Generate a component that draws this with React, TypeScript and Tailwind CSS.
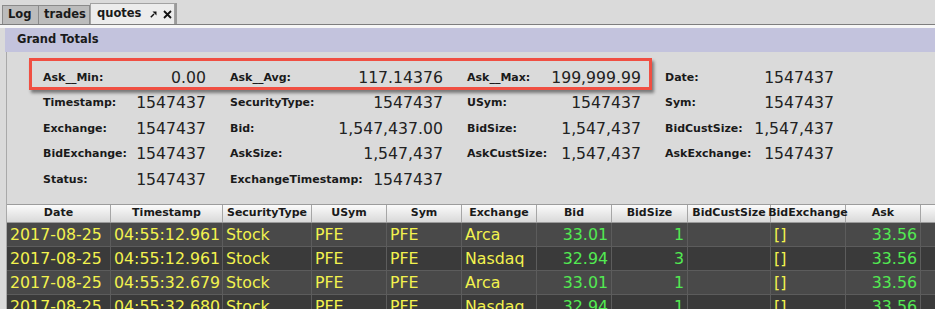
import React from "react";

type Stat = [string, string] | null;

const stats: Stat[][] = [
  [["Ask__Min:", "0.00"], ["Ask__Avg:", "117.14376"], ["Ask__Max:", "199,999.99"], ["Date:", "1547437"]],
  [["Timestamp:", "1547437"], ["SecurityType:", "1547437"], ["USym:", "1547437"], ["Sym:", "1547437"]],
  [["Exchange:", "1547437"], ["Bid:", "1,547,437.00"], ["BidSize:", "1,547,437"], ["BidCustSize:", "1,547,437"]],
  [["BidExchange:", "1547437"], ["AskSize:", "1,547,437"], ["AskCustSize:", "1,547,437"], ["AskExchange:", "1547437"]],
  [["Status:", "1547437"], ["ExchangeTimestamp:", "1547437"], null, null],
];

const columns = [
  { name: "Date", w: "w-[104px]", align: "text-left", color: "text-[#f2f24e]" },
  { name: "Timestamp", w: "w-[112px]", align: "text-left", color: "text-[#f2f24e]" },
  { name: "SecurityType", w: "w-[89px]", align: "text-left", color: "text-[#f2f24e]" },
  { name: "USym", w: "w-[75px]", align: "text-left", color: "text-[#f2f24e]" },
  { name: "Sym", w: "w-[75px]", align: "text-left", color: "text-[#f2f24e]" },
  { name: "Exchange", w: "w-[75px]", align: "text-left", color: "text-[#f2f24e]" },
  { name: "Bid", w: "w-[75px]", align: "text-right", color: "text-[#52ea52]" },
  { name: "BidSize", w: "w-[76px]", align: "text-right", color: "text-[#52ea52]" },
  { name: "BidCustSize", w: "w-[83px]", align: "text-right", color: "text-[#52ea52]" },
  { name: "BidExchange", w: "w-[75px]", align: "text-left", color: "text-[#f2f24e]" },
  { name: "Ask", w: "w-[75px]", align: "text-right", color: "text-[#52ea52]" },
  { name: "", w: "w-[60px]", align: "text-left", color: "text-[#f2f24e]" },
];

const rows = [
  ["2017-08-25", "04:55:12.961", "Stock", "PFE", "PFE", "Arca", "33.01", "1", "", "[]", "33.56", ""],
  ["2017-08-25", "04:55:12.961", "Stock", "PFE", "PFE", "Nasdaq", "32.94", "3", "", "[]", "33.56", ""],
  ["2017-08-25", "04:55:32.679", "Stock", "PFE", "PFE", "Arca", "33.01", "1", "", "[]", "33.56", ""],
  ["2017-08-25", "04:55:32.680", "Stock", "PFE", "PFE", "Nasdaq", "32.94", "1", "", "[]", "33.56", ""],
];

function PinIcon() {
  return (
    <svg width="7" height="7" viewBox="0 0 7 7">
      <path d="M0.8 6.2 L4 3" stroke="#111" strokeWidth="1.5" />
      <path d="M2.5 0.5 L6.5 0.5 L6.5 4.5 Z" fill="#111" />
    </svg>
  );
}

function CloseIcon() {
  return (
    <svg width="9" height="9" viewBox="0 0 9 9">
      <path d="M1 1 L8 8 M8 1 L1 8" stroke="#111" strokeWidth="1.8" />
    </svg>
  );
}

export default function App() {
  return (
    <div className="relative w-[935px] h-[309px] overflow-hidden bg-[#dadada] font-['DejaVu_Sans',sans-serif] text-[#1a1a1a]">
      {/* Tabs */}
      <div className="flex items-end h-[24px] pl-[2px] text-[11.5px] font-bold">
        <div className="w-[37px] h-[19px] flex items-center pl-[5px] bg-[#bcbcbc] border border-b-0 border-[#8a8a8a]">Log</div>
        <div className="w-[51px] h-[19px] flex items-center pl-[5px] bg-[#bcbcbc] border border-l-0 border-b-0 border-[#8a8a8a]">trades</div>
        <div className="relative w-[85px] h-[21px] flex items-center pl-[6px] bg-[#ececec] border border-b-0 border-[#a2a2a2] shadow-[2px_0_0_#9a9a9a]">
          <span>quotes</span>
          <span className="ml-[9px] flex items-center"><PinIcon /></span>
          <span className="ml-[6px] flex items-center"><CloseIcon /></span>
        </div>
      </div>
      <div className="h-px bg-[#7e7e7e]" />
      <div className="h-[3px] bg-[#f6f6f6]" />

      <div className="ml-[5px]">
        {/* Header bar */}
        <div className="h-[24px] bg-[#c3c3dd] flex items-center pl-[12px] text-[11.5px] font-bold">Grand Totals</div>

        <div className="border-l border-[#a9a9a9] ml-px">
          {/* Stats grid */}
          <div className="h-[152px] pt-[13px] pl-[36px]">
            <div className="grid grid-cols-[163px_213px_174px_169px] gap-x-[24px]">
              {stats.flat().map((s, i) => (
                <div key={i} className="h-[25.5px] flex items-center justify-between">
                  {s && (
                    <>
                      <span className="text-[11px] font-bold">{s[0]}</span>
                      <span className="text-[15.7px] text-[#222]">{s[1]}</span>
                    </>
                  )}
                </div>
              ))}
            </div>
          </div>

          {/* Table */}
          <div className="border-t border-[#9c9c9c]">
            <div className="flex h-[18px] border-b border-[#9a9a9a] bg-gradient-to-b from-[#fbfbfb] to-[#d9d9d9] text-[11px] font-bold">
              {columns.map((c, i) => (
                <div key={i} className={`${c.w} shrink-0 border-r border-[#a6a6a6] flex items-center justify-center`}>
                  {c.name}
                </div>
              ))}
            </div>
            {rows.map((r, ri) => (
              <div key={ri} className={`flex h-[24px] border-b border-[#5c5c5c] ${ri % 2 === 0 ? "bg-[#494949]" : "bg-[#3a3a3a]"}`}>
                {r.map((v, ci) => (
                  <div
                    key={ci}
                    className={`${columns[ci].w} ${columns[ci].align} ${columns[ci].color} shrink-0 border-r border-[#5c5c5c] px-[3px] text-[15.8px] leading-[23px] whitespace-nowrap overflow-hidden`}
                  >
                    {v}
                  </div>
                ))}
              </div>
            ))}
          </div>
        </div>
      </div>

      {/* Annotation box */}
      <div className="absolute left-[29px] top-[58px] w-[623px] h-[32px] border-[3px] border-[#f04f42] shadow-[2px_3px_3px_rgba(0,0,0,0.45)]" />
    </div>
  );
}
